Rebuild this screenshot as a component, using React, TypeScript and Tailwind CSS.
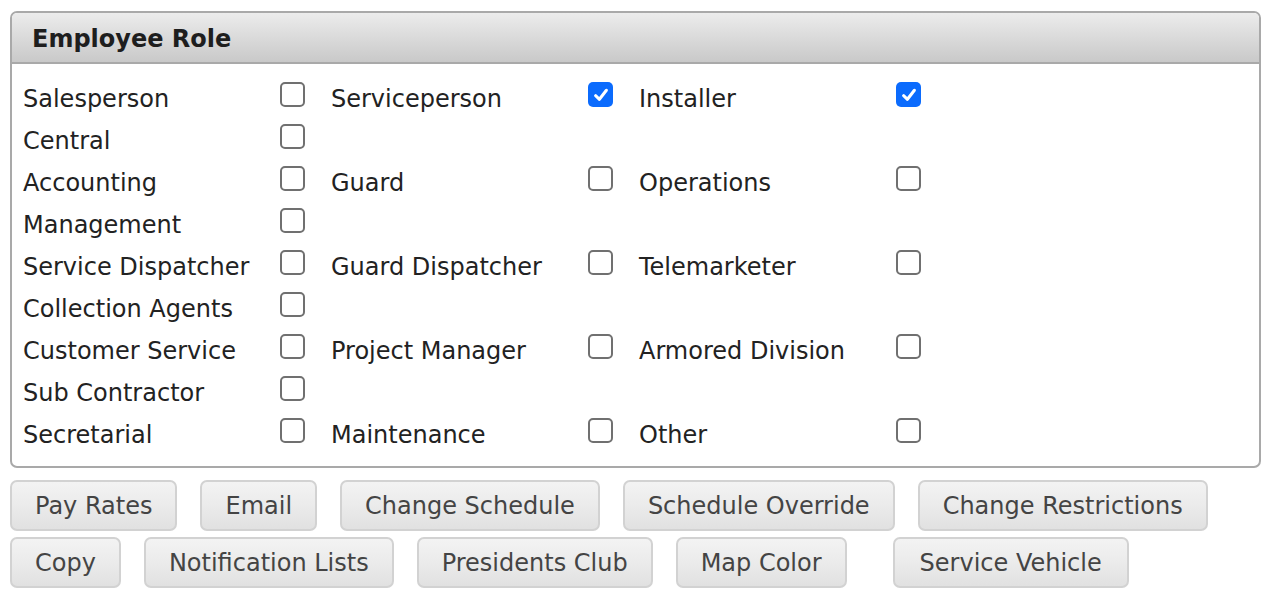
import React from "react";

type Role = { label: string; checked?: boolean };

const rows: Role[][] = [
  [{ label: "Salesperson" }, { label: "Serviceperson", checked: true }, { label: "Installer", checked: true }],
  [{ label: "Central" }],
  [{ label: "Accounting" }, { label: "Guard" }, { label: "Operations" }],
  [{ label: "Management" }],
  [{ label: "Service Dispatcher" }, { label: "Guard Dispatcher" }, { label: "Telemarketer" }],
  [{ label: "Collection Agents" }],
  [{ label: "Customer Service" }, { label: "Project Manager" }, { label: "Armored Division" }],
  [{ label: "Sub Contractor" }],
  [{ label: "Secretarial" }, { label: "Maintenance" }, { label: "Other" }],
];

const buttonRows: { label: string; extra?: string }[][] = [
  [{ label: "Pay Rates" }, { label: "Email" }, { label: "Change Schedule" }, { label: "Schedule Override" }, { label: "Change Restrictions" }],
  [{ label: "Copy" }, { label: "Notification Lists" }, { label: "Presidents Club" }, { label: "Map Color" }, { label: "Service Vehicle", extra: "ml-[23px] px-[25px]" }],
];

function Check({ checked }: { checked?: boolean }) {
  if (checked) {
    return (
      <span className="flex h-[25px] w-[25px] shrink-0 items-center justify-center rounded-[5px] bg-[#0b6bfd] -mt-[5px]">
        <svg width="18" height="18" viewBox="0 0 16 16" fill="none">
          <path d="M3.2 8.6 L6.6 11.8 L12.8 3.8" stroke="#fff" strokeWidth="2.7" strokeLinecap="round" strokeLinejoin="round" />
        </svg>
      </span>
    );
  }
  return <span className="block h-[25px] w-[25px] shrink-0 rounded-[5px] border-2 border-[#707070] bg-white -mt-[5px]" />;
}

export default function App() {
  return (
    <div className="min-h-[610px] w-[1270px] bg-white pl-[10px] pt-[11px] text-[#222] [font-family:'DejaVu_Sans',Verdana,sans-serif]">
      <div className="w-[1251px] overflow-hidden rounded-[7px] border-2 border-[#a9a9a9]">
        <div className="flex h-[51px] items-center border-b-2 border-[#a9a9a9] bg-gradient-to-b from-[#ececec] to-[#c9c9c9] pl-[20px] pt-[2px] text-[24px] font-bold text-[#1e1e1e]">
          Employee Role
        </div>
        <div className="flex flex-col py-[12px] pl-[11px]">
          {rows.map((row, i) => (
            <div key={i} className="flex h-[42px] items-center">
              {row.map((r) => (
                <div key={r.label} className="flex w-[308px] items-center">
                  <span className="mt-[3px] w-[257px] text-[24px] leading-none">{r.label}</span>
                  <Check checked={r.checked} />
                </div>
              ))}
            </div>
          ))}
        </div>
      </div>
      <div className="mt-[12px] flex flex-col gap-[6px]">
        {buttonRows.map((br, i) => (
          <div key={i} className="flex gap-[23px]">
            {br.map((b) => (
              <button
                key={b.label}
                className={`h-[51px] rounded-[7px] border-2 border-[#d2d2d2] bg-gradient-to-b from-[#f3f3f3] via-[#ebebeb] to-[#e1e1e1] pt-[1px] text-[24px] text-[#444] ${b.extra ?? "px-[23px]"}`}
              >
                {b.label}
              </button>
            ))}
          </div>
        ))}
      </div>
    </div>
  );
}
